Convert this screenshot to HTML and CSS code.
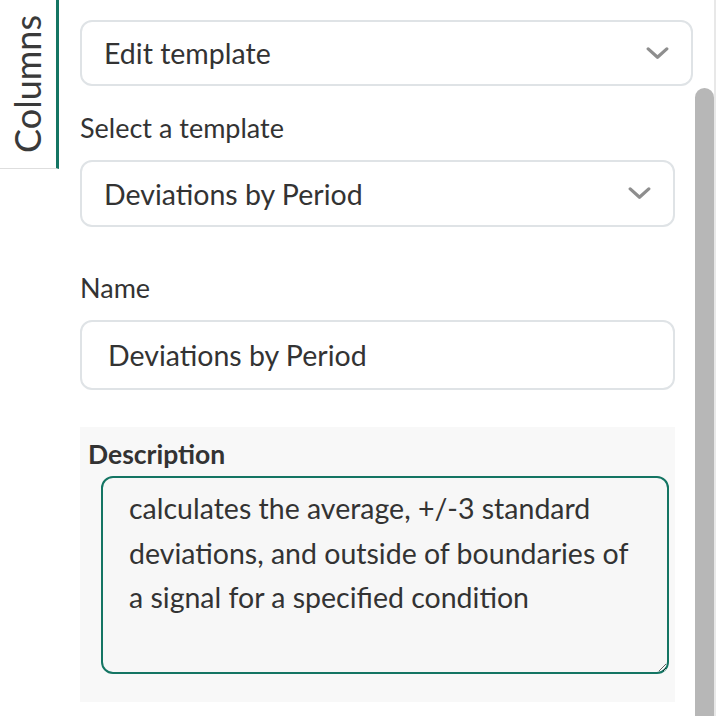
FILE: index.html
```html
<!DOCTYPE html>
<html lang="en">
  <head>
    <meta charset="UTF-8" />
    <meta name="viewport" content="width=device-width, initial-scale=1.0" />
    <link rel="stylesheet" href="styles.css">
  </head>

  <body>
    <div class="app">
      <!-- side tab -->
      <div class="tabs">
        <div class="tab"><span class="tab-text">Columns</span></div>
      </div>

      <div class="main">
        <div class="header">
          <div class="dropdown wide">
            <span>Edit template</span>
            <svg class="chevron" viewBox="0 0 24 14"><polyline points="2,2 12,11 22,2" /></svg>
          </div>
        </div>

        <div class="scroller">
          <div class="content">
            <label class="field-label">Select a template</label>
            <div class="dropdown">
              <span>Deviations by Period</span>
              <svg class="chevron" viewBox="0 0 24 14"><polyline points="2,2 12,11 22,2" /></svg>
            </div>

            <label class="field-label name-label" for="name">Name</label>
            <input id="name" class="text-input" type="text" value="Deviations by Period" />

            <div class="description">
              <label class="desc-label" for="desc">Description</label>
              <textarea id="desc" class="desc-input">calculates the average, +/-3 standard deviations, and outside of boundaries of a signal for a specified condition</textarea>
            </div>
          </div>
          <div class="scrollbar"></div>
        </div>
      </div>
    </div>
  </body>
</html>
```

FILE: styles.css
```css
body {
  margin: 0;
  overflow: hidden;
  font-family: Lato, "Liberation Sans", sans-serif;
  color: #333;
  background: #fff;
}

.app {
  display: flex;
  width: 716px;
  height: 716px;
  box-sizing: border-box;
  border-right: 2px solid #e8e8e8;
}

.tabs {
  width: 59px;
  flex-shrink: 0;
}
.tab {
  box-sizing: border-box;
  height: 169px;
  border-right: 3px solid #147563;
  border-bottom: 1px solid #dedede;
  display: flex;
  align-items: center;
  justify-content: center;
  padding-right: 2px;
}
/* reads bottom to top */
.tab-text {
  writing-mode: vertical-rl;
  transform: rotate(180deg);
  font-size: 36px;
  color: #3a3a3a;
}

.main {
  flex: 1;
  padding-left: 21px;
  display: flex;
  flex-direction: column;
}

.header {
  padding-top: 20px;
}

.dropdown {
  box-sizing: border-box;
  width: 595px;
  height: 67px;
  border: 2px solid #dfe3e6;
  border-radius: 12px;
  display: flex;
  align-items: center;
  justify-content: space-between;
  padding: 0 22px 0 22px;
  font-size: 28.5px;
  color: #333;
}
.dropdown.wide {
  width: 613px;
  height: 66px;
}

.chevron {
  width: 23px;
  height: 13px;
  fill: none;
  stroke: #8e8e8e;
  stroke-width: 3.5;
  stroke-linecap: round;
  stroke-linejoin: round;
}

.scroller {
  flex: 1;
  display: flex;
  gap: 20px;
  margin-top: 2px;
}

.content {
  width: 595px;
}

.scrollbar {
  width: 19px;
  background: #b7b7b7;
  border-radius: 10px 10px 0 0;
}

.field-label {
  display: block;
  font-size: 27px;
  line-height: 34px;
  margin-top: 23px;
  margin-bottom: 15px;
}
.name-label {
  margin-top: 44px;
  margin-bottom: 15px;
}

.text-input {
  box-sizing: border-box;
  width: 595px;
  height: 70px;
  border: 2px solid #dfe3e6;
  border-radius: 12px;
  padding: 0 26px;
  font-family: inherit;
  font-size: 28.5px;
  color: #333;
  outline: none;
  display: block;
}

.description {
  margin-top: 37px;
  background: #f8f8f8;
  padding: 10px 6px 28px 8px;
  height: 275px;
  box-sizing: border-box;
}
.desc-label {
  display: block;
  font-weight: bold;
  font-size: 26.5px;
  line-height: 34px;
  margin-bottom: 5px;
}
.desc-input {
  display: block;
  box-sizing: border-box;
  width: 568px;
  height: 198px;
  margin-left: 13px;
  border: 2px solid #147563;
  border-radius: 12px;
  background: #f7f7f7;
  padding: 8px 30px 0 26px;
  font-family: inherit;
  font-size: 28.5px;
  line-height: 44.5px;
  color: #333;
  outline: none;
}
```
